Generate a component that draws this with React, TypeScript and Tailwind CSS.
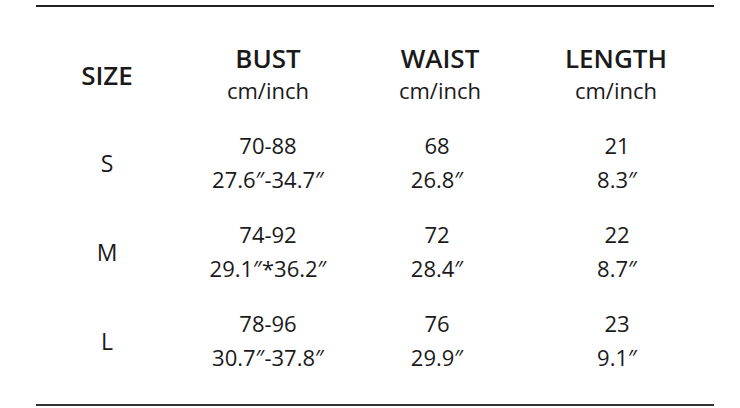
import React from "react";

interface SizeRow {
  size: string;
  bust: [string, string];
  waist: [string, string];
  length: [string, string];
}

const rows: SizeRow[] = [
  { size: "S", bust: ["70-88", "27.6″-34.7″"], waist: ["68", "26.8″"], length: ["21", "8.3″"] },
  { size: "M", bust: ["74-92", "29.1″*36.2″"], waist: ["72", "28.4″"], length: ["22", "8.7″"] },
  { size: "L", bust: ["78-96", "30.7″-37.8″"], waist: ["76", "29.9″"], length: ["23", "9.1″"] },
];

const headers = ["BUST", "WAIST", "LENGTH"];

const Cell: React.FC<{ lines: [string, string] }> = ({ lines }) => (
  <div className="flex flex-col items-center text-[22px] leading-[34px]">
    <span>{lines[0]}</span>
    <span>{lines[1]}</span>
  </div>
);

export default function App() {
  return (
    <div
      className="w-[740px] h-[408px] bg-white text-[#1a1a1a] flex flex-col"
      style={{ fontFamily: '"Open Sans", "Noto Sans", sans-serif' }}
    >
      <div className="ml-[36px] mt-[5px] w-[678px] h-[2px] bg-[#222]" />

      <div className="ml-[36px] mt-[35px] grid grid-cols-[142px_180px_164px_188px] gap-y-[21px]">
        <div className="flex items-center justify-center text-[26px] font-semibold pt-[2px]">SIZE</div>
        {headers.map((h) => (
          <div key={h} className="flex flex-col items-center h-[65px]">
            <span className="text-[26px] font-semibold leading-[32px]">{h}</span>
            <span className="text-[22px] leading-[32px]">cm/inch</span>
          </div>
        ))}

        {rows.map((r) => (
          <React.Fragment key={r.size}>
            <div className="flex items-center justify-center text-[23px] pt-[2px]">{r.size}</div>
            <Cell lines={r.bust} />
            <div className="pr-[6px]">
              <Cell lines={r.waist} />
            </div>
            <div className="pl-[2px]">
              <Cell lines={r.length} />
            </div>
          </React.Fragment>
        ))}
      </div>

      <div className="ml-[36px] mt-auto mb-[2px] w-[678px] h-[2px] bg-[#333]" />
    </div>
  );
}
